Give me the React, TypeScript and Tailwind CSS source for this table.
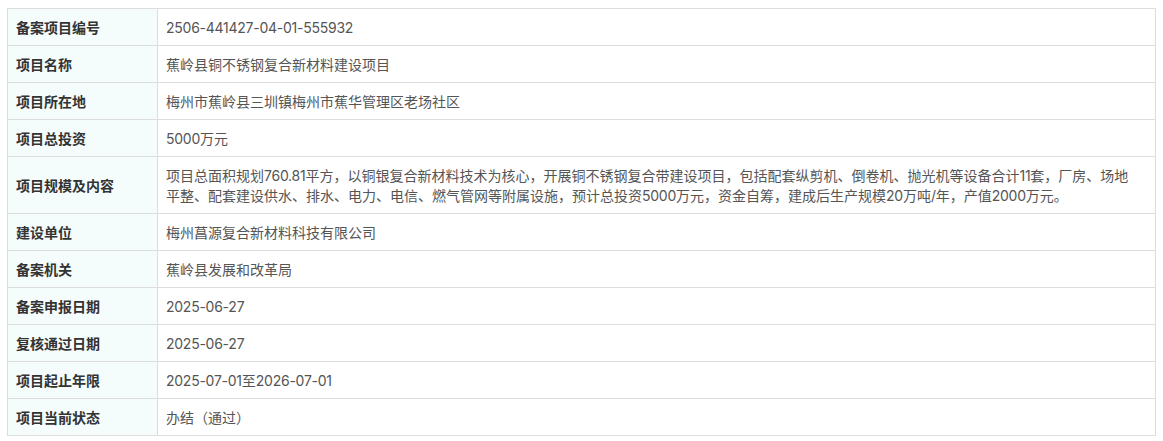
const rows: [string, string][] = [
  ["备案项目编号", "2506-441427-04-01-555932"],
  ["项目名称", "蕉岭县铜不锈钢复合新材料建设项目"],
  ["项目所在地", "梅州市蕉岭县三圳镇梅州市蕉华管理区老场社区"],
  ["项目总投资", "5000万元"],
  [
    "项目规模及内容",
    "项目总面积规划760.81平方，以铜银复合新材料技术为核心，开展铜不锈钢复合带建设项目，包括配套纵剪机、倒卷机、抛光机等设备合计11套，厂房、场地平整、配套建设供水、排水、电力、电信、燃气管网等附属设施，预计总投资5000万元，资金自筹，建成后生产规模20万吨/年，产值2000万元。",
  ],
  ["建设单位", "梅州菖源复合新材料科技有限公司"],
  ["备案机关", "蕉岭县发展和改革局"],
  ["备案申报日期", "2025-06-27"],
  ["复核通过日期", "2025-06-27"],
  ["项目起止年限", "2025-07-01至2026-07-01"],
  ["项目当前状态", "办结（通过）"],
];

// latin runs get a wider latin face, CJK stays on Noto
function Mixed({ text }: { text: string }) {
  const parts = text.split(/([\x20-\x7e]+)/);
  return (
    <>
      {parts.map((p, i) =>
        i % 2 === 1 ? (
          <span key={i} className="font-['Inter'] leading-none tracking-[-0.25px]">
            {p}
          </span>
        ) : (
          p
        )
      )}
    </>
  );
}

export default function App() {
  return (
    <div
      className="bg-white pl-[7px] pr-[7px] pt-2 min-h-screen"
      style={{ fontFamily: '"Noto Sans CJK SC", sans-serif' }}
    >
      <table className="w-full border-collapse text-[14px] leading-5 table-fixed">
        <colgroup>
          <col className="w-[150px]" />
          <col />
        </colgroup>
        <tbody>
          {rows.map(([label, value]) => (
            <tr key={label}>
              <td className="border border-[#dddddd] bg-[#f4fcfc] px-2 py-2 font-bold text-[#333333] align-middle">
                {label}
              </td>
              <td className="border border-[#dddddd] pl-2 pr-4 py-2 text-[#555555] align-middle">
                <Mixed text={value} />
              </td>
            </tr>
          ))}
        </tbody>
      </table>
    </div>
  );
}
